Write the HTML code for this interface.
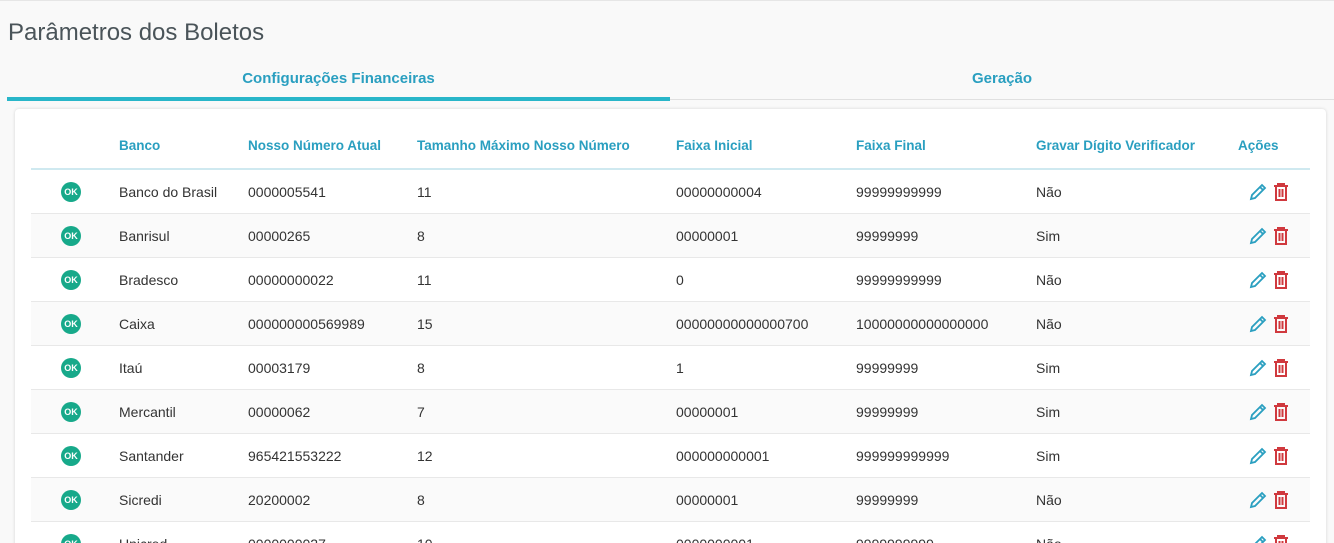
<!DOCTYPE html><html style="overflow:hidden;height:543px"><head><style>
body{margin:0;width:1334px;height:543px;overflow:hidden;background:#f9f9f9;font-family:"Liberation Sans",sans-serif;position:relative}
.top{position:absolute;top:0;left:0;right:0;height:1px;background:#e6e6e6}
h1{position:absolute;left:8px;top:19px;margin:0;font-weight:normal;font-size:24px;color:#4a5459}
.tab{position:absolute;top:70px;font-size:15px;font-weight:bold;color:#2a9fc0;text-align:center}
.card{position:absolute;left:15px;top:109px;width:1311px;height:440px;background:#fff;border-radius:4px;box-shadow:0 0 3px rgba(0,0,0,.15);overflow:hidden}
table{position:absolute;left:16px;top:0;width:1279px;border-collapse:collapse;font-size:14px;color:#333}
th{height:44px;padding:0;text-align:left;font-size:13.5px;color:#2a9fc0;font-weight:bold;border-bottom:2px solid #cfe9f0;vertical-align:bottom;padding-bottom:15px}
td{height:43px;padding:0;border-bottom:1px solid #e8e8e8}
tr:nth-child(even) td{background:#fafafa}
.ok{display:inline-block;width:20px;height:20px;border-radius:50%;background:#17a98a;color:#fff;font-size:9px;font-weight:bold;line-height:20px;text-align:center;margin-left:30px}
</style></head><body>
<div class="top"></div>
<h1>Parâmetros dos Boletos</h1>
<div class="tab" style="left:7px;width:663px">Configurações Financeiras</div>
<div style="position:absolute;left:7px;top:97px;width:663px;height:4px;background:#29b6c9"></div>
<div style="position:absolute;left:670px;top:99px;width:664px;height:1px;background:#e0e0e0"></div>
<div class="tab" style="left:670px;width:664px">Geração</div>
<div class="card">
<table>
<colgroup><col style="width:88px"><col style="width:129px"><col style="width:169px"><col style="width:259px"><col style="width:180px"><col style="width:180px"><col style="width:202px"><col></colgroup>
<tr><th></th><th>Banco</th><th>Nosso Número Atual</th><th>Tamanho Máximo Nosso Número</th><th>Faixa Inicial</th><th>Faixa Final</th><th>Gravar Dígito Verificador</th><th>Ações</th></tr>
<tbody id="b"></tbody>
</table></div>
<script>
const d=[["Banco do Brasil","0000005541","11","00000000004","99999999999","Não"],["Banrisul","00000265","8","00000001","99999999","Sim"],["Bradesco","00000000022","11","0","99999999999","Não"],["Caixa","000000000569989","15","00000000000000700","10000000000000000","Não"],["Itaú","00003179","8","1","99999999","Sim"],["Mercantil","00000062","7","00000001","99999999","Sim"],["Santander","965421553222","12","000000000001","999999999999","Sim"],["Sicredi","20200002","8","00000001","99999999","Não"],["Unicred","0000000027","10","0000000001","9999999999","Não"]];
const ic='<svg width="20" height="20" viewBox="0 0 20 20" style="vertical-align:middle;margin-left:10px"><path d="M3 17l1-4L14 3l3 3L7 16z M12 5l3 3" fill="none" stroke="#2a9fc0" stroke-width="1.8"/></svg><svg width="20" height="20" viewBox="0 0 20 20" style="vertical-align:middle;margin-left:3px"><path d="M3 4h14M7 4V2h6v2M5 4v14h10V4M8.5 7v8M11.5 7v8" fill="none" stroke="#d0393e" stroke-width="2"/></svg>';
let h="";for(const r of d){h+='<tr><td><span class="ok">OK</span></td>'+r.map(x=>'<td>'+x+'</td>').join('')+'<td>'+ic+'</td></tr>'}
document.getElementById('b').outerHTML=h;
</script>
</body></html>
